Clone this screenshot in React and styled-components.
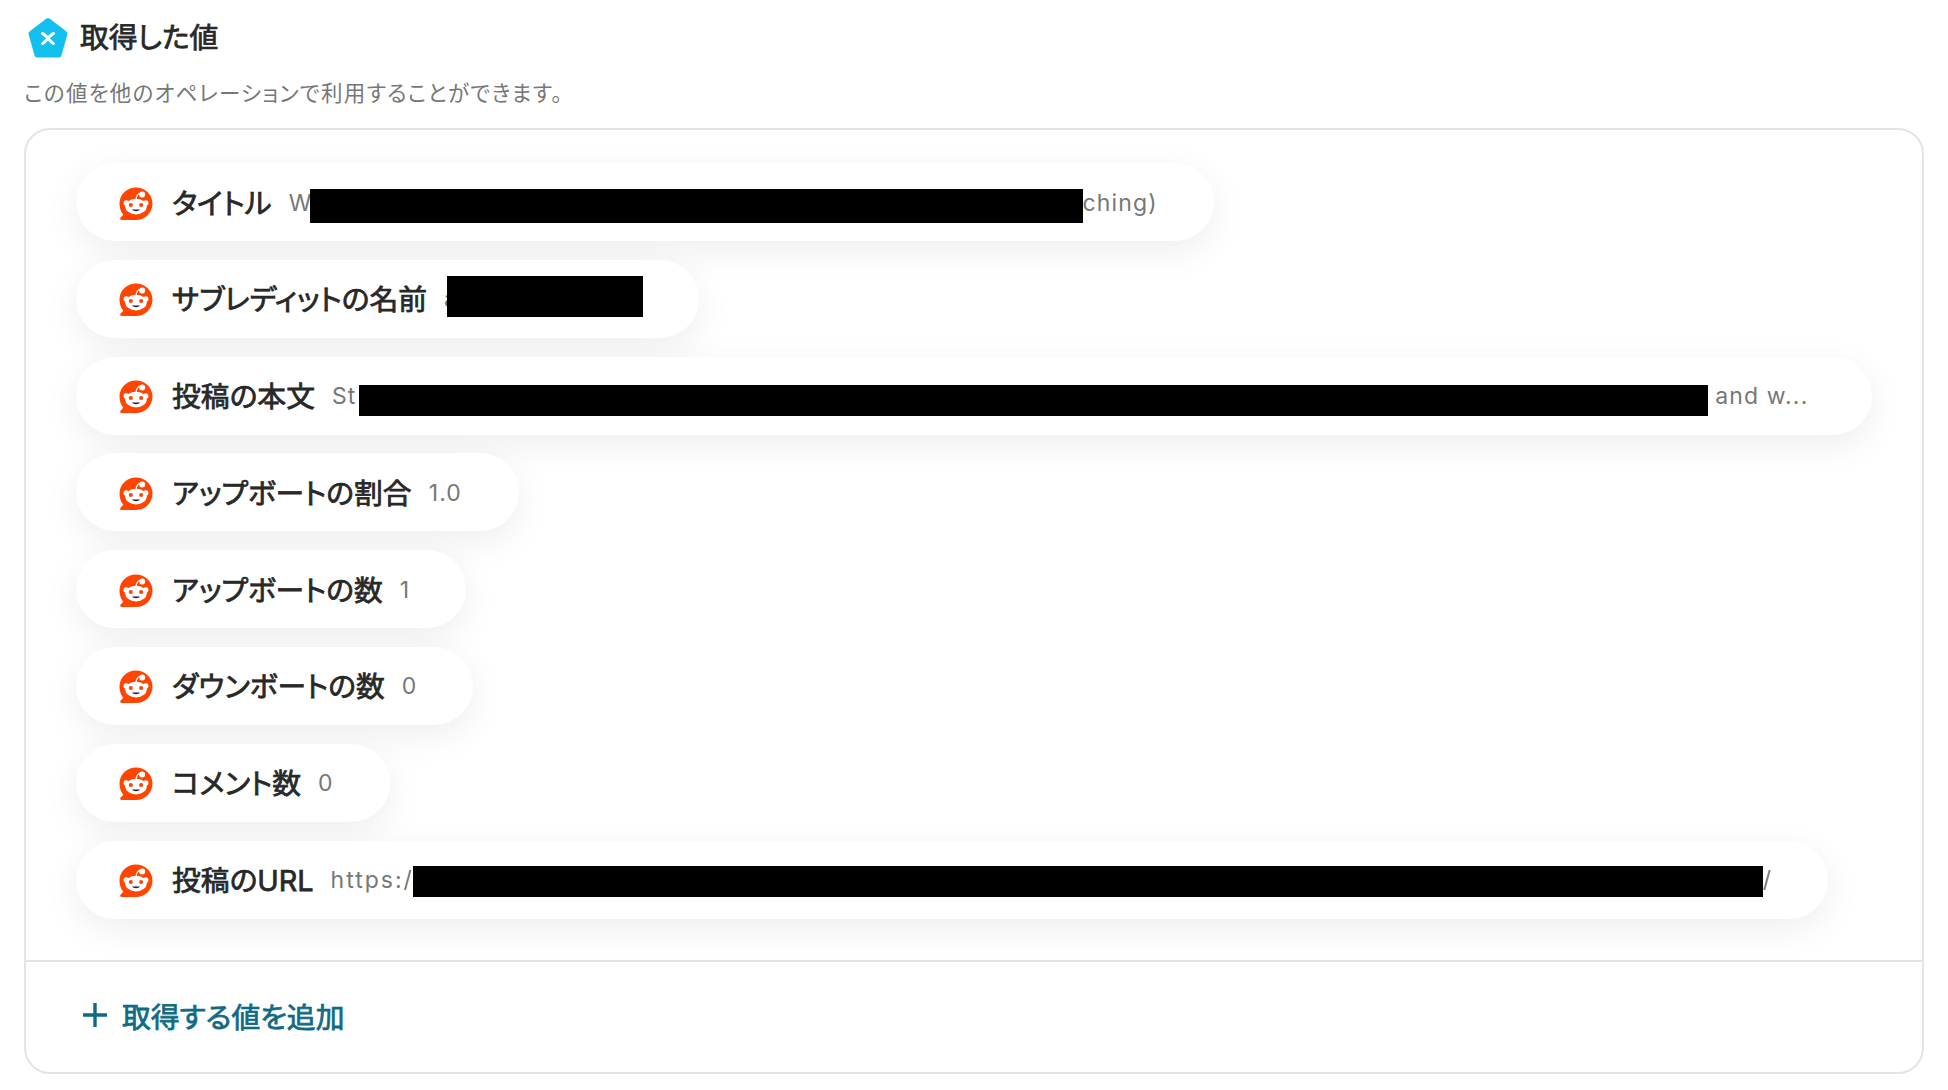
import React from "react";
import styled, { createGlobalStyle } from "styled-components";

const Global = createGlobalStyle`
  html, body { margin: 0; padding: 0; background: #fff; }
  body { font-family: "Inter", "Noto Sans CJK JP", sans-serif; color: #282828; font-feature-settings: "palt"; }
`;

const Page = styled.main`
  width: 1948px;
  height: 1090px;
  padding: 16px 24px 16px 24px;
  box-sizing: border-box;
  display: flex;
  flex-direction: column;
`;

const Heading = styled.header`
  display: flex;
  align-items: center;
  gap: 12px;
  height: 44px;
  padding-left: 4px;
`;

const Title = styled.h2`
  margin: 0;
  font-size: 28.8px;
  font-weight: 400;
  -webkit-text-stroke: 0.75px #282828;
  line-height: 40px;
  color: #282828;
`;

const Description = styled.p`
  margin: 19px 0 20px;
  font-size: 21.5px;
  line-height: 29px;
  letter-spacing: 1.28px;
  color: #777;
`;

const Card = styled.section`
  flex: 1;
  border: 2px solid #e4e4e4;
  border-radius: 26px;
  display: flex;
  flex-direction: column;
`;

const List = styled.ul`
  list-style: none;
  margin: 0;
  padding: 33px 50px 41px;
  display: flex;
  flex-direction: column;
  align-items: flex-start;
  gap: 18.8px;
  border-bottom: 2px solid #e4e4e4;
`;

const Pill = styled.li`
  height: 78px;
  box-sizing: border-box;
  border-radius: 39px;
  background: #fff;
  box-shadow: 0 10px 36px rgba(0, 0, 0, 0.07);
  display: flex;
  align-items: center;
  padding: 0 ${(p) => p.$end}px 0 43px;
  white-space: nowrap;
`;

const Label = styled.span`
  margin-left: 19px;
  margin-top: -2px;
  font-size: 28.8px;
  font-weight: 400;
  -webkit-text-stroke: 0.75px #282828;
  color: #282828;
`;

const Value = styled.span`
  display: flex;
  align-items: center;
  margin-left: 17px;
  padding-top: 1px;
  font-size: 23px;
  letter-spacing: ${(p) => p.$tracking}px;
  color: #777;
`;

const Redaction = styled.span`
  display: inline-block;
  width: ${(p) => p.$w}px;
  height: ${(p) => p.$h}px;
  background: #000;
  margin-top: ${(p) => p.$drop}px;
  margin-left: ${(p) => p.$shift}px;
`;

const Tail = styled.span`
  white-space: pre;
`;

const AddRow = styled.div`
  flex: 1;
  display: flex;
  align-items: center;
  gap: 13px;
  padding: 0 0 3px 55px;
  color: #0f6b83;
  font-size: 28.8px;
  font-weight: 400;
  -webkit-text-stroke: 0.75px #0f6b83;
`;

const IconSlot = styled.svg`
  flex: none;
  margin-top: 3px;
`;

const Logo = () => (
  <svg width="40" height="42" viewBox="0 0 40 42" aria-hidden="true">
    <path
      d="M20 3.5 L37 16.5 L31 38 H9 L3 16.5 Z"
      fill="#12bfee"
      stroke="#12bfee"
      strokeWidth="5"
      strokeLinejoin="round"
    />
    <path d="M14.5 16.5 C18 18 22 24.5 25.5 26.5 M25.5 16.5 C22 18 18 24.5 14.5 26.5" fill="none" stroke="#fff" strokeWidth="3" strokeLinecap="round" />
  </svg>
);

const Reddit = () => (
  <IconSlot width="34" height="34" viewBox="0 0 33 33" aria-hidden="true">
    <path d="M16.5 0.5 C25.5 0.5 32.5 7.5 32.5 16 C32.5 25 25.5 32 16.5 32 H2.5 C1.2 32 .7 30.6 1.6 29.7 L4.2 27 C1.8 24.2 .5 20.4 .5 16 C.5 7.5 7.5 .5 16.5 .5 Z" fill="#ff4500" />
    <circle cx="22.5" cy="7.3" r="2.9" fill="#fff" />
    <path d="M16.5 12.5 C16.8 9 18 6.5 21 6" fill="none" stroke="#fff" strokeWidth="1.1" />
    <circle cx="7" cy="15.5" r="2.6" fill="#fff" />
    <circle cx="26" cy="15.5" r="2.6" fill="#fff" />
    <ellipse cx="16.5" cy="19" rx="10.5" ry="7.6" fill="#fff" />
    <circle cx="11.5" cy="17.5" r="2" fill="#ff4500" />
    <circle cx="21.5" cy="17.5" r="2" fill="#ff4500" />
    <path d="M12.5 21.8 C14.5 24 18.5 24 20.5 21.8 Z" fill="#222" />
  </IconSlot>
);

const Plus = () => (
  <svg width="28" height="28" viewBox="0 0 28 28" aria-hidden="true">
    <path d="M14 2 V26 M2 14 H26" stroke="#0f6b83" strokeWidth="3.4" fill="none" />
  </svg>
);

const rows = [
  { label: "タイトル", before: "W", redact: [773, 34, 6, -3], after: "ching)", end: 56 },
  { label: "サブレディットの名前", before: "a", redact: [196, 41, -5, -11], after: "", end: 56 },
  { label: "投稿の本文", before: "St", redact: [1349, 31, 9, 2], after: " and w...", end: 64 },
  { label: "アップボートの割合", before: "1.0", end: 57 },
  { label: "アップボートの数", before: "1", end: 56 },
  { label: "ダウンボートの数", before: "0", end: 56 },
  { label: "コメント数", before: "0", end: 56 },
  { label: "投稿のURL", before: "https:/", tracking: 2, redact: [1350, 31, 3, -1], after: "/", end: 55 },
];

export default function App() {
  return (
    <Page>
      <Global />
      <Heading>
        <Logo />
        <Title>取得した値</Title>
      </Heading>
      <Description>この値を他のオペレーションで利用することができます。</Description>
      <Card>
        <List>
          {rows.map((r) => (
            <Pill key={r.label} $end={r.end}>
              <Reddit />
              <Label>{r.label}</Label>
              <Value $tracking={r.tracking ?? 1.15}>
                {r.before}
                {r.redact && <Redaction $w={r.redact[0]} $h={r.redact[1]} $drop={r.redact[2]} $shift={r.redact[3]} />}
                {r.after && <Tail>{r.after}</Tail>}
              </Value>
            </Pill>
          ))}
        </List>
        <AddRow>
          <Plus />
          取得する値を追加
        </AddRow>
      </Card>
    </Page>
  );
}
